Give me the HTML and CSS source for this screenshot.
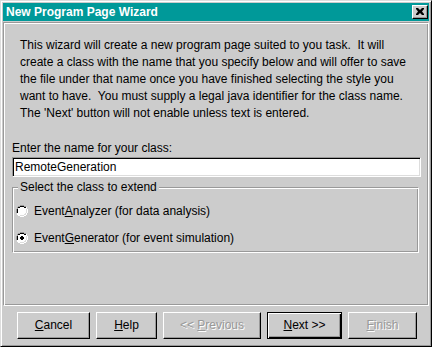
FILE: index.html
```html
<!DOCTYPE html>
<html>
<head>
<meta charset="utf-8">
<link rel="stylesheet" href="styles.css">
</head>
<body>
<div class="window">
  <div class="titlebar">
    <span class="title">New Program Page Wizard</span>
    <span class="close"><svg width="8" height="7" viewBox="0 0 8 7"><path d="M0 0h2l2 2 2-2h2v1L6 3.5 8 6v1H6L4 5 2 7H0V6l2-2.5L0 1z" fill="#000"/></svg></span>
  </div>
  <div class="panel">
    <div class="intro"><span class="line">This wizard will create a new program page suited to you task.  It will</span><span class="line">create a class with the name that you specify below and will offer to save</span><span class="line">the file under that name once you have finished selecting the style you</span><span class="line">want to have.  You must supply a legal java identifier for the class name.</span><span class="line">The 'Next' button will not enable unless text is entered.</span></div>
    <div class="field-label">Enter the name for your class:</div>
    <div class="textfield">RemoteGeneration</div>
    <fieldset class="group">
      <legend>Select the class to extend</legend>
      <div class="radio-row">
        <svg class="radio" width="12" height="12" viewBox="0 0 12 12">
          <path d="M4 0h4v1h2v1h1v2h1v4h-1v2h-1v1H8v1H4v-1H2v-1H1V8H0V4h1V2h1V1h2z" fill="#fff"/>
          <path d="M4 0h4v1h2v1H8V1H4v1H2v2H1v4H0V4h1V2h1V1h2z" fill="#999"/>
          <path d="M4 1h4v1h2v1H8V2H4v1H2v1H1V4h1V2h2z M1 4h1v4H1z" fill="#000"/>
          <path d="M10 3h0v1h1v4h-1v2H8v1H4v-1h4V8h2z" fill="#ddd"/>
          <path d="M4 2h4v1h1v1h1v4H9v1H8v1H4V9H3V8H2V4h1V3h1z" fill="#fff"/>
        </svg>
        <span>Event<u>A</u>nalyzer (for data analysis)</span>
      </div>
      <div class="radio-row">
        <svg class="radio" width="12" height="12" viewBox="0 0 12 12">
          <path d="M4 0h4v1h2v1h1v2h1v4h-1v2h-1v1H8v1H4v-1H2v-1H1V8H0V4h1V2h1V1h2z" fill="#fff"/>
          <path d="M4 0h4v1h2v1H8V1H4v1H2v2H1v4H0V4h1V2h1V1h2z" fill="#999"/>
          <path d="M4 1h4v1h2v1H8V2H4v1H2v1H1V4h1V2h2z M1 4h1v4H1z" fill="#000"/>
          <path d="M10 3h0v1h1v4h-1v2H8v1H4v-1h4V8h2z" fill="#ddd"/>
          <path d="M4 2h4v1h1v1h1v4H9v1H8v1H4V9H3V8H2V4h1V3h1z" fill="#fff"/>
          <path d="M5 4h2v1h1v2H7v1H5V7H4V5h1z" fill="#000"/>
        </svg>
        <span>Event<u>G</u>enerator (for event simulation)</span>
      </div>
    </fieldset>
  </div>
  <div class="buttons">
    <div class="btn w-cancel"><span><u>C</u>ancel</span></div>
    <div class="btn w-help"><span><u>H</u>elp</span></div>
    <div class="btn w-prev disabled"><span>&lt;&lt; <u>P</u>revious</span></div>
    <div class="btn w-next default"><span><u>N</u>ext &gt;&gt;</span></div>
    <div class="btn w-finish disabled"><span><u>F</u>inish</span></div>
  </div>
</div>
</body>
</html>
```
FILE: styles.css
```css
html, body {
  margin: 0;
  padding: 0;
  background: #cccccc;
}
body {
  font-family: "Liberation Sans", Arial, sans-serif;
  font-size: 12px;
  color: #000;
}
.window {
  box-sizing: border-box;
  width: 432px;
  height: 347px;
  background: #cccccc;
  border: 1px solid;
  border-color: #dddddd #000000 #000000 #dddddd;
  box-shadow: inset 1px 1px 0 #ffffff, inset -1px -1px 0 #999999;
  padding: 2px;
  display: flex;
  flex-direction: column;
}
.titlebar {
  height: 18px;
  background: #009999;
  display: flex;
  align-items: center;
  justify-content: space-between;
  padding: 0 1px 0 3px;
}
.title {
  color: #ffffff;
  font-weight: bold;
  font-size: 12px;
  line-height: 18px;
}
.close {
  box-sizing: border-box;
  width: 16px;
  height: 14px;
  background: #cccccc;
  border: 1px solid;
  border-color: #ffffff #000000 #000000 #ffffff;
  box-shadow: inset -1px -1px 0 #999999;
  display: flex;
  align-items: center;
  justify-content: center;
  padding: 0 1px 1px 0;
}
.close svg { display: block; }
.panel {
  box-sizing: border-box;
  margin-top: 1px;
  height: 284px;
  border: 1px solid;
  border-color: #999999 #ffffff #ffffff #999999;
  box-shadow: inset 1px 1px 0 #ffffff, inset -1px -1px 0 #999999;
  padding: 14px 0 0 8px;
}
.intro {
  padding-left: 8px;
  line-height: 17px;
}
.line {
  display: block;
  white-space: pre;
}
.field-label {
  margin-top: 18px;
  line-height: 17px;
}
.textfield {
  box-sizing: border-box;
  width: 409px;
  height: 20px;
  background: #ffffff;
  border: 1px solid;
  border-color: #999999 #ffffff #ffffff #999999;
  box-shadow: inset 1px 1px 0 #000000, inset -1px -1px 0 #dddddd;
  padding: 0 0 0 2px;
  line-height: 18px;
}
.group {
  box-sizing: border-box;
  width: 407px;
  margin: 3px 0 0 0;
  padding: 3px 0 1px 0;
  border: 1px solid;
  border-color: #999999 #ffffff #ffffff #999999;
  box-shadow: inset 1px 1px 0 #ffffff, inset -1px -1px 0 #999999;
  min-inline-size: 0;
}
.group legend {
  margin-left: 5px;
  padding: 0 2px;
  line-height: 14px;
  background: #cccccc;
}
.radio-row {
  height: 27px;
  display: flex;
  align-items: center;
  padding-left: 3px;
  gap: 6px;
}
.radio { display: block; }
.buttons {
  display: flex;
  gap: 6px;
  padding: 6px 0 0 14px;
}
.btn {
  box-sizing: border-box;
  height: 27px;
  background: #cccccc;
  border: 1px solid;
  border-color: #ffffff #000000 #000000 #ffffff;
  box-shadow: inset -1px -1px 0 #999999;
  display: flex;
  align-items: center;
  justify-content: center;
  padding-bottom: 1px;
}
.btn span { white-space: pre; }
.btn.default {
  border-color: #000000;
  box-shadow: inset 1px 1px 0 #ffffff, inset -1px -1px 0 #000000, inset -2px -2px 0 #999999;
}
.btn.disabled {
  color: #999999;
  text-shadow: 1px 1px 0 #ffffff;
}
.w-cancel { width: 73px; }
.w-help { width: 61px; }
.w-prev { width: 98px; }
.w-next { width: 75px; }
.w-finish { width: 69px; }
```
